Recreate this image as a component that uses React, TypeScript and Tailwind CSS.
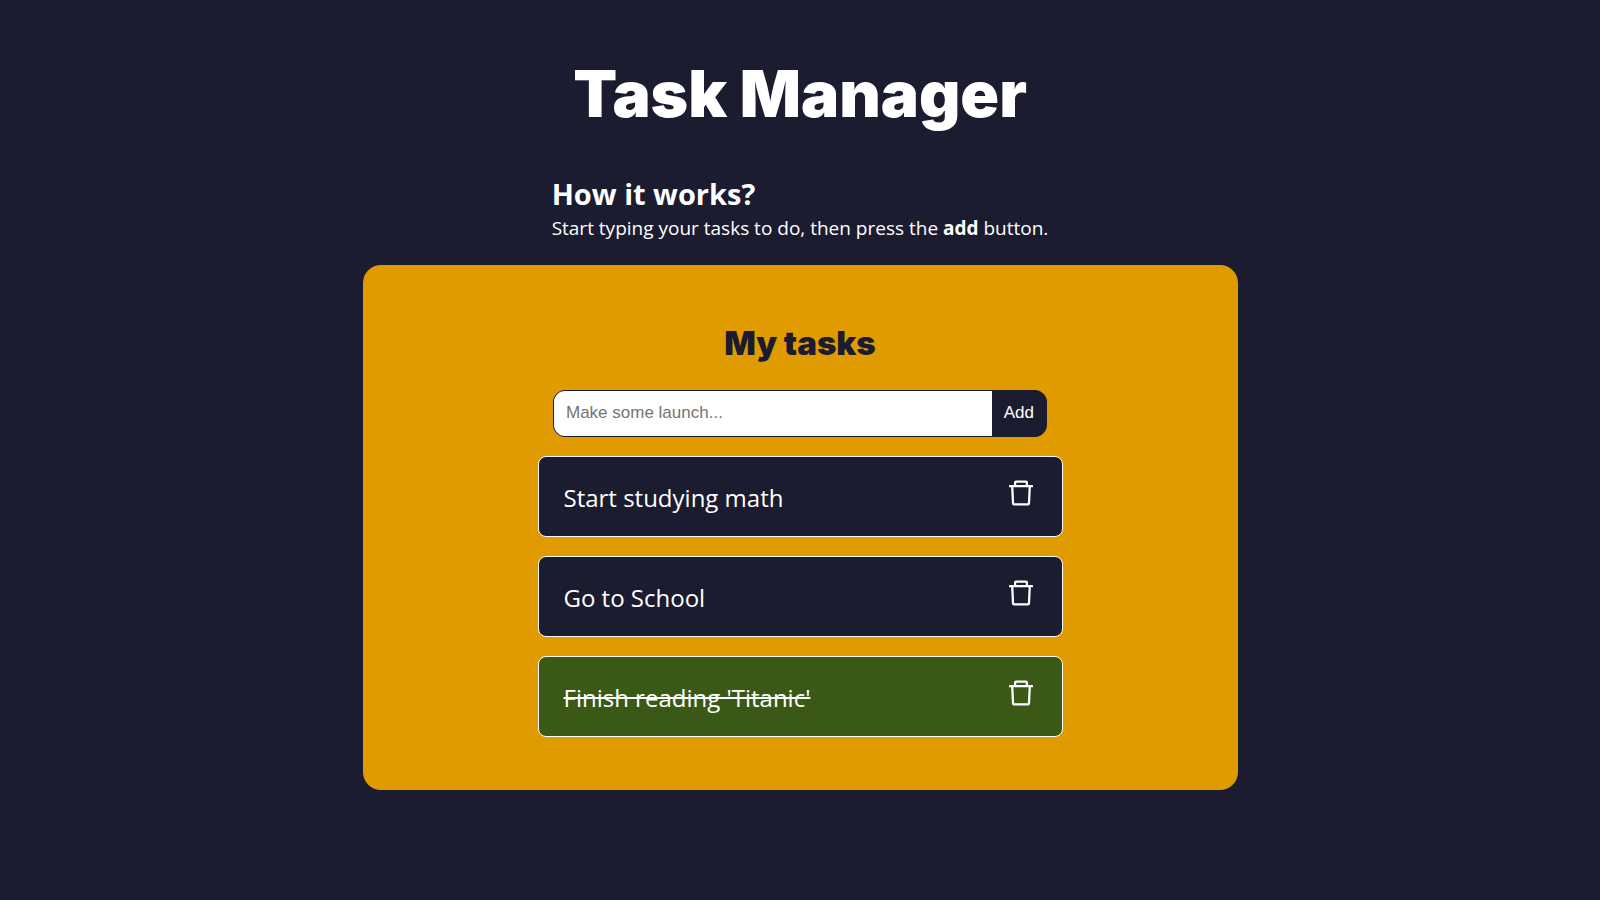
import { useState, type FormEvent } from "react";
import { AiOutlineDelete } from "react-icons/ai";

type Task = { id: number; title: string; done: boolean };

const initialTasks: Task[] = [
  { id: 1, title: "Start studying math", done: false },
  { id: 2, title: "Go to School", done: false },
  { id: 3, title: "Finish reading 'Titanic'", done: true },
];

function TaskRow({ task, onToggle, onRemove }: { task: Task; onToggle: () => void; onRemove: () => void }) {
  return (
    <li
      className={
        task.done
          ? "flex items-start justify-between rounded-lg border border-white bg-[#3a5917] px-[25px] py-5 text-white"
          : "flex items-start justify-between rounded-lg border border-white bg-[#1c1c30] px-[25px] py-5 text-white"
      }
    >
      <button
        type="button"
        onClick={onToggle}
        className={
          task.done
            ? "pt-0.5 text-left text-2xl leading-[37px] line-through decoration-2"
            : "pt-0.5 text-left text-2xl leading-[37px]"
        }
      >
        {task.title}
      </button>
      <button type="button" aria-label="Delete task" onClick={onRemove}>
        <AiOutlineDelete size={32} />
      </button>
    </li>
  );
}

export default function App() {
  const [tasks, setTasks] = useState(initialTasks);
  const [title, setTitle] = useState("");

  function addTask(event: FormEvent) {
    event.preventDefault();
    if (!title.trim()) return;
    setTasks([...tasks, { id: Date.now(), title, done: false }]);
    setTitle("");
  }

  return (
    <main className="flex min-h-screen flex-col items-center bg-[#1c1c30] px-4 pt-[52px] pb-10 font-['Open_Sans',sans-serif] text-white">
      <h1 className="font-['Inter',sans-serif] text-[64px] leading-[84px] font-black">Task Manager</h1>
      <section className="mt-10">
        <h2 className="text-[29px] leading-9 font-bold">How it works?</h2>
        <p className="text-[19px] leading-8">
          Start typing your tasks to do, then press the <strong>add</strong> button.
        </p>
      </section>
      <section className="mt-[21px] flex w-full max-w-[875px] flex-col items-center rounded-[18px] bg-[#e09b00] px-4 pt-14 pb-[53px]">
        <h2 className="font-['Inter',sans-serif] text-[33px] leading-[45px] font-black text-[#1c1c30]">My tasks</h2>
        <form
          onSubmit={addTask}
          className="mt-6 flex w-full max-w-[494px] overflow-hidden rounded-xl border border-[#1c1c30] bg-[#1c1c30] font-['Liberation_Sans',sans-serif] text-[17px]"
        >
          <input
            aria-label="New task"
            placeholder="Make some launch..."
            value={title}
            onChange={(event) => setTitle(event.target.value)}
            className="h-[45px] min-w-0 flex-1 bg-white px-3 pb-0.5 text-[#1c1c30] outline-none placeholder:text-[#757575]"
          />
          <button type="submit" className="bg-[#1c1c30] px-3 pb-0.5 text-white">
            Add
          </button>
        </form>
        <ul className="mt-[19px] flex w-full max-w-[525px] flex-col gap-[19px]">
          {tasks.map((task) => (
            <TaskRow
              key={task.id}
              task={task}
              onToggle={() => setTasks(tasks.map((t) => (t.id === task.id ? { ...t, done: !t.done } : t)))}
              onRemove={() => setTasks(tasks.filter((t) => t.id !== task.id))}
            />
          ))}
        </ul>
      </section>
    </main>
  );
}
